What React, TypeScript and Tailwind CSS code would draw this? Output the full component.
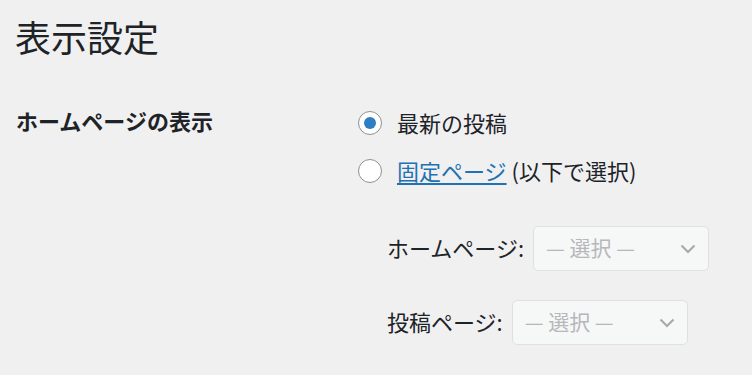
import React from 'react';

const font = { fontFamily: '"Noto Sans CJK JP", "Noto Sans", sans-serif' };

const Radio = ({ checked }: { checked?: boolean }) => (
  <span className="flex h-[24px] w-[24px] shrink-0 items-center justify-center rounded-full border-[1.5px] border-[#8c8f94] bg-white">
    {checked && <span className="h-[12px] w-[12px] rounded-full bg-[#2f7ec4]" />}
  </span>
);

const SelectBox = () => (
  <div className="flex h-[45px] w-[176px] items-center justify-between rounded-[5px] border border-[#e0e0e2] bg-[#f6f7f7] pl-[12px] pr-[12px] text-[21px] text-[#b5b7ba]">
    <span className="-mt-[2px]">— 選択 —</span>
    <svg width="16" height="10" viewBox="0 0 16 10" fill="none">
      <path d="M1.5 1.5L8 8L14.5 1.5" stroke="#a7aaad" strokeWidth="2.2" />
    </svg>
  </div>
);

const App: React.FC = () => {
  return (
    <div className="h-[375px] w-[752px] overflow-hidden bg-[#f0f0f1] text-[#1d2327]" style={font}>
      <h1 className="pl-[15px] pt-[14px] text-[36px] leading-[45px] font-normal">表示設定</h1>

      <div className="mt-[52px] flex">
        <div className="w-[342px] pl-[16px] text-[22px] font-bold leading-[24px] -mt-[3px]">ホームページの表示</div>

        <div className="flex flex-col pl-[16px]">
          <div className="flex flex-col gap-[24px]">
            <label className="flex items-center gap-[15px] text-[22px] leading-[24px]">
              <Radio checked />
              <span className="-mt-[3px]">最新の投稿</span>
            </label>
            <label className="flex items-center gap-[15px] text-[22px] leading-[24px]">
              <Radio />
              <span className="-mt-[3px]">
                <span className="text-[#2271b1] underline underline-offset-[3px]">固定ページ</span> (以下で選択)
              </span>
            </label>
          </div>

          <div className="mt-[43px] flex flex-col gap-[29px] pl-[29px]">
            <div className="flex items-center gap-[9px] text-[22px]">
              <span className="-mt-[2px]">ホームページ:</span>
              <SelectBox />
            </div>
            <div className="flex items-center gap-[9px] text-[22px]">
              <span className="-mt-[2px]">投稿ページ:</span>
              <SelectBox />
            </div>
          </div>
        </div>
      </div>
    </div>
  );
};

export default App;
